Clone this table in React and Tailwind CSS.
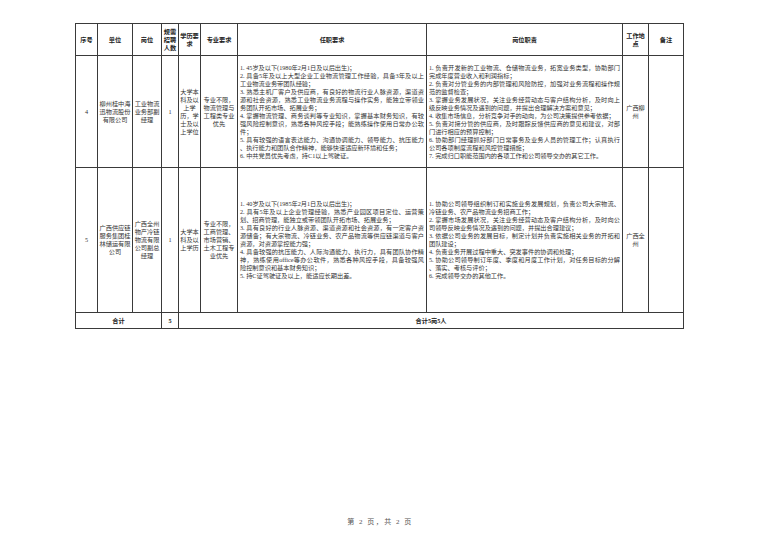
const FONT = "font-['Liberation_Serif','Noto_Sans_CJK_SC',serif]";

const req1 = [
  ["1. 45岁及以下(1980年2月1日及以后出生)；"],
  ["2. 具备5年及以上大型企业工业物流管理工作经验，具备3年及以上", "工业物流业务带团队经验；"],
  [
    "3. 熟悉主机厂客户及供应商，有良好的物流行业人脉资源，渠道资",
    "源和社会资源，熟悉工业物流业务流程与操作实务，能独立带领业",
    "务团队开拓市场、拓展业务；",
  ],
  [
    "4. 掌握物流管理、商务谈判等专业知识，掌握基本财务知识，有较",
    "强风险控制意识，熟悉各种风控手段；能熟练操作使用日常办公软",
    "件；",
  ],
  ["5. 具有较强的语言表达能力、沟通协调能力、领导能力、抗压能力", "、执行能力和团队合作精神，能够快速适应新环境和任务；"],
  ["6. 中共党员优先考虑，持C1以上驾驶证。"],
];

const duty1 = [
  ["1. 负责开发新的工业物流、仓储物流业务，拓宽业务类型，协助部门", "完成年度营业收入和利润指标；"],
  ["2. 负责对分管业务的内部管理和风险防控，加强对业务流程和操作规", "范的监督检查；"],
  ["3. 掌握业务发展状况，关注业务经营动态与客户结构分析，及时向上", "级反映业务情况及遇到的问题，并提出合理解决方案和意见；"],
  ["4. 收集市场信息，分析竞争对手的动向，为公司决策提供参考依据；"],
  ["5. 负责对接分管的供应商，及时跟踪反馈供应商的意见和建议，对部", "门进行相应的预算控制；"],
  ["6. 协助部门经理抓好部门日常事务及业务人员的管理工作；认真执行", "公司各项制度流程和风控管理措施；"],
  ["7. 完成归口职能范围内的各项工作和公司领导交办的其它工作。"],
];

const req2 = [
  ["1. 40岁及以下(1985年2月1日及以后出生)；"],
  ["2. 具有5年及以上企业管理经验，熟悉产业园区项目定位、运营策", "划、招商管理，能独立或带领团队开拓市场、拓展业务；"],
  [
    "3. 具有良好的行业人脉资源、渠道资源和社会资源，有一定客户资",
    "源储备；有大宗物流、冷链业务、农产品物流等供应链渠道与客户",
    "资源，对资源掌控能力强；",
  ],
  [
    "4. 具备较强的抗压能力、人际沟通能力、执行力，具有团队协作精",
    "神，熟练使用office等办公软件，熟悉各种风控手段，具备较强风",
    "险控制意识和基本财务知识；",
  ],
  ["5. 持C证驾驶证及以上，能适应长期出差。"],
];

const duty2 = [
  ["1. 协助公司领导组织制订和实施业务发展规划，负责公司大宗物流、", "冷链业务、农产品物流业务招商工作；"],
  ["2. 掌握市场发展状况，关注业务经营动态及客户结构分析，及时向公", "司领导反映业务情况及遇到的问题，并提出合理建议；"],
  ["3. 依据公司业务的发展目标，制定计划并负责实施相关业务的开拓和", "团队建设；"],
  ["4. 负责业务开展过程中重大、突发事件的协调和处理；"],
  ["5. 协助公司领导制订年度、季度和月度工作计划，对任务目标的分解", "、落实、考核与评价；"],
  ["6. 完成领导交办的其他工作。"],
];

function Para({ items }) {
  return (
    <div className="px-[2px] text-left">
      {items.map((lines, i) =>
        lines.map((line, j) => (
          <div
            key={`${i}-${j}`}
            className={
              j < lines.length - 1
                ? "whitespace-nowrap text-justify [text-align-last:justify]"
                : "whitespace-nowrap"
            }
          >
            {line}
          </div>
        ))
      )}
    </div>
  );
}

function Stack({ lines }) {
  return (
    <div className="flex flex-col items-center">
      {lines.map((l) => (
        <span key={l} className="whitespace-nowrap">
          {l}
        </span>
      ))}
    </div>
  );
}

const cell = "border border-[#3a3a3a] p-0 align-middle text-center";

export default function App() {
  return (
    <div className={`${FONT} flex h-[537px] w-[760px] flex-col bg-white text-[#333]`}>
      <div className="pl-[75px] pt-[23px]">
        <table className="w-[608px] table-fixed border-collapse text-[6.2px] leading-[8px]">
          <colgroup>
            <col className="w-[22px]" />
            <col className="w-[35px]" />
            <col className="w-[29px]" />
            <col className="w-[17px]" />
            <col className="w-[22px]" />
            <col className="w-[37px]" />
            <col className="w-[189px]" />
            <col className="w-[196px]" />
            <col className="w-[26px]" />
            <col className="w-[35px]" />
          </colgroup>
          <thead>
            <tr className="h-[32px] font-bold text-[#222]">
              <th className={cell}>序号</th>
              <th className={cell}>单位</th>
              <th className={cell}>岗位</th>
              <th className={cell}>
                <Stack lines={["规需", "招聘", "人数"]} />
              </th>
              <th className={cell}>
                <Stack lines={["学历要", "求"]} />
              </th>
              <th className={cell}>专业要求</th>
              <th className={cell}>任职要求</th>
              <th className={cell}>岗位职责</th>
              <th className={cell}>
                <Stack lines={["工作地", "点"]} />
              </th>
              <th className={cell}>备注</th>
            </tr>
          </thead>
          <tbody>
            <tr className="h-[112px]">
              <td className={cell}>4</td>
              <td className={cell}>
                <Stack lines={["柳州桂中海", "迅物流股份", "有限公司"]} />
              </td>
              <td className={cell}>
                <Stack lines={["工业物流", "业务部副", "经理"]} />
              </td>
              <td className={cell}>1</td>
              <td className={cell}>
                <Stack lines={["大学本", "科及以", "上学", "历，学", "士及以", "上学位"]} />
              </td>
              <td className={cell}>
                <Stack lines={["专业不限，", "物流管理与", "工程类专业", "优先"]} />
              </td>
              <td className={cell}>
                <Para items={req1} />
              </td>
              <td className={cell}>
                <Para items={duty1} />
              </td>
              <td className={cell}>
                <Stack lines={["广西柳", "州"]} />
              </td>
              <td className={cell}></td>
            </tr>
            <tr className="h-[145px]">
              <td className={cell}>5</td>
              <td className={cell}>
                <Stack lines={["广西供应链", "服务集团桂", "林储运有限", "公司"]} />
              </td>
              <td className={cell}>
                <Stack lines={["广西全州", "物产冷链", "物流有限", "公司副总", "经理"]} />
              </td>
              <td className={cell}>1</td>
              <td className={cell}>
                <Stack lines={["大学本", "科及以", "上学历"]} />
              </td>
              <td className={cell}>
                <Stack lines={["专业不限，", "工商管理、", "市场营销、", "土木工程专", "业优先"]} />
              </td>
              <td className={cell}>
                <Para items={req2} />
              </td>
              <td className={cell}>
                <Para items={duty2} />
              </td>
              <td className={cell}>
                <Stack lines={["广西全", "州"]} />
              </td>
              <td className={cell}></td>
            </tr>
            <tr className="h-[16px] font-bold text-[#222]">
              <td className={cell} colSpan={3}>
                合计
              </td>
              <td className={cell}>5</td>
              <td className={cell} colSpan={6}>
                合计5岗5人
              </td>
            </tr>
          </tbody>
        </table>
      </div>
      <div className="mt-auto pb-[11px] text-center text-[7px] leading-[8px] tracking-[1.5px] text-[#555]">
        第 2 页，共 2 页
      </div>
    </div>
  );
}
